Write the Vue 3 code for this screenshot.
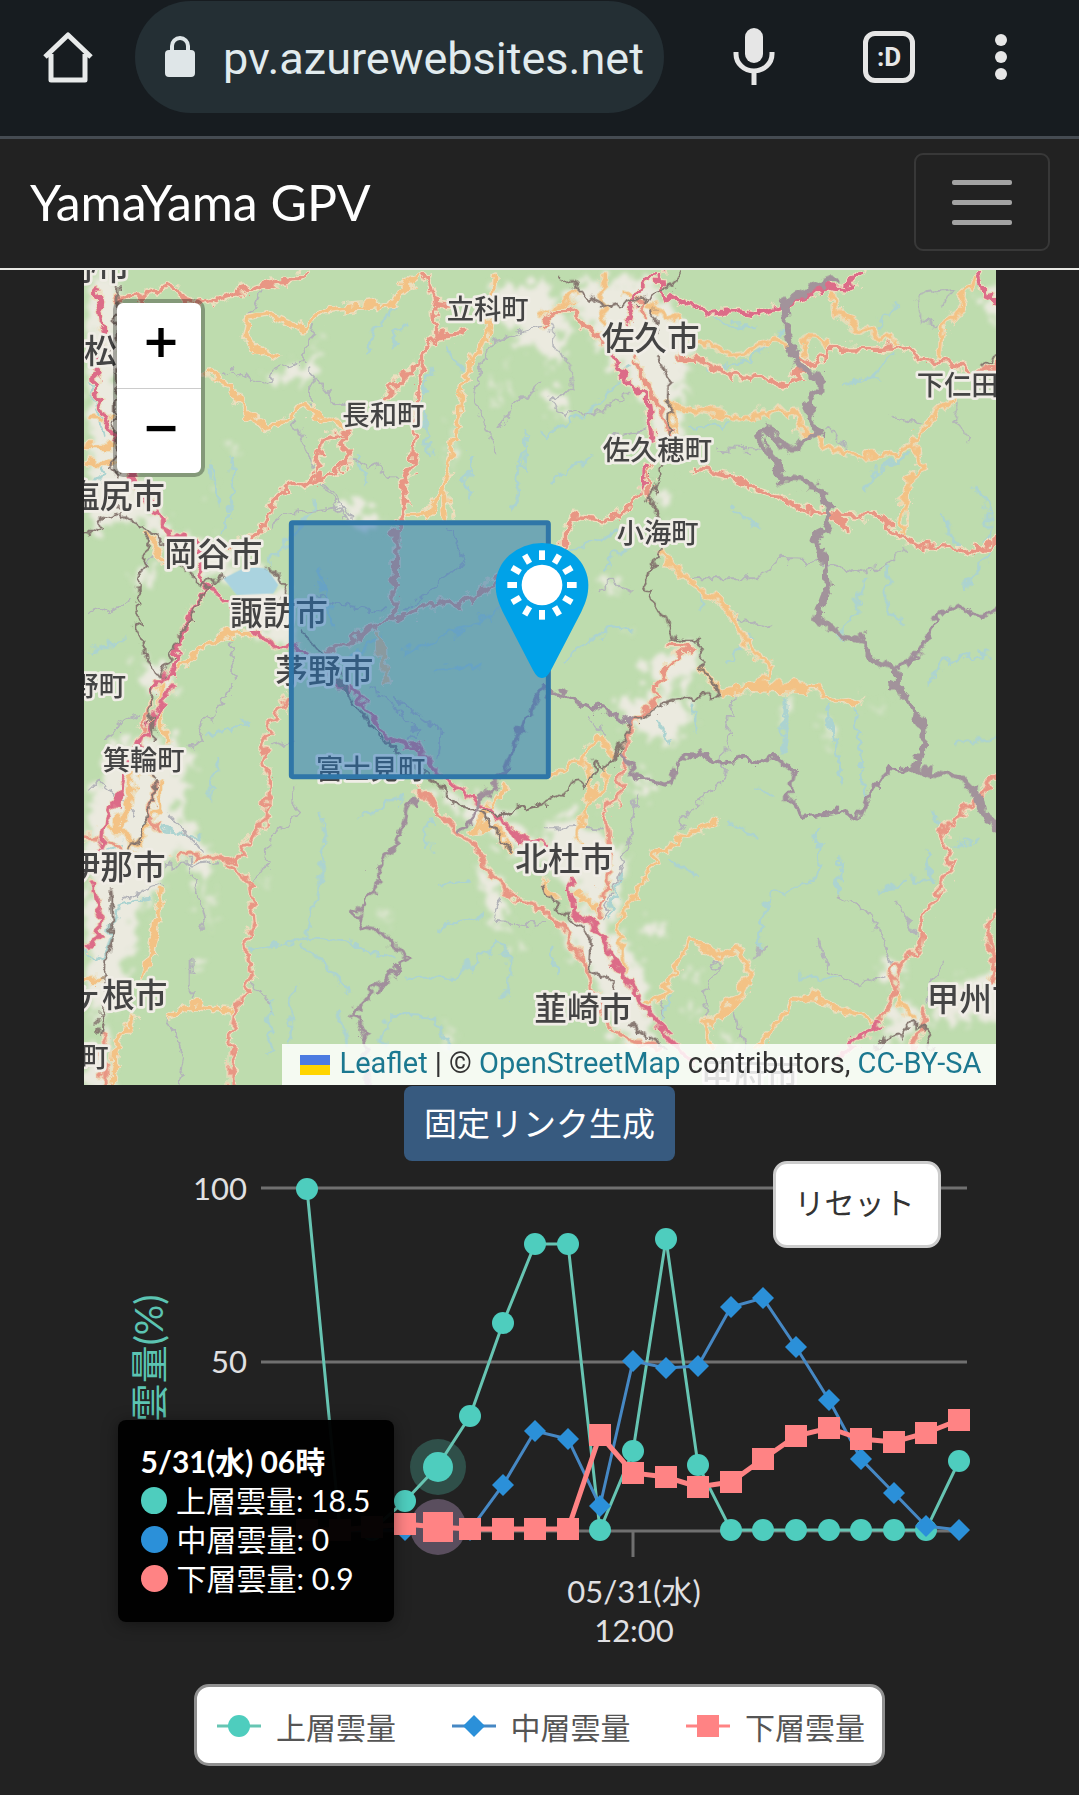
<script setup>
// Map artwork: four tiles, drawn at three units per pixel.
const tiles = [
  {
    id: 'nw', x: -12, y: -15,
    urban: 'M0 0H90L100 400L150 640L240 760L330 800L460 820L440 900L370 920L230 800L100 730L0 800Z M430 900Q520 860 600 960L620 1120L520 1100L440 960Z M540 310L660 270L700 180L690 310L620 330Z M750 700L830 680L880 760H780Z M1200 60L1380 20V260L1280 180L1200 120Z M130 920L240 840L170 960Z M150 1150L240 1200L280 1260H180Z M410 520L440 515L430 540Z M345 660L375 640L378 665Z M1080 450L1105 500L1090 600Z M1240 300L1260 380L1235 410Z',
    water: 'M430 940L500 905L560 910L595 960L580 985L470 990Z',
    river: 'M380 580L400 700 M440 560L455 640L410 800 M300 90L340 200 M930 110L870 180L850 250 M1040 300L1010 400L1040 560 M1160 560L1150 700 M1330 480L1310 640L1280 720 M960 160L920 240 M20 340L60 500 M30 640L60 600 M700 900L760 1080 M960 1150L1100 1100L1240 1030 M780 1180L900 1100 M1050 1200L1180 1190 M20 1150L130 1100 M820 560L850 640 M560 880L700 700 M1130 300L1090 240',
    minor: 'M410 310L450 300L540 350L590 300L650 275L690 180 M685 290L680 400 M690 320L750 390L780 410 M640 460L690 610L790 750 M720 640L800 740 M790 580L860 590L940 630 M560 780L620 730L780 710 M1380 170L1230 210L1190 290L1170 400L1240 550 M1240 480L1290 400L1380 350 M20 1040L140 1000 M540 60L500 140 M650 1010L700 985L800 1015L900 1030 M1100 780L1140 880L960 1030 M440 1120L450 1240 M180 900L230 850',
    secondary: 'M490 150L480 200L510 235L580 265 M490 150L560 135L660 180L730 125L920 105L940 70L1010 25 M370 310L430 350L490 440L550 475L640 440L665 405L720 455L790 480 M1230 15L1225 110L1210 200L1150 290L1130 400L1100 570L1070 680L1040 730L970 745 M1085 660L1095 750 M0 580L100 590 M0 530H90 M20 450H80 M280 1200L360 1130L450 1090L520 1090 M190 800L240 880 M880 1090L910 1240',
    primary: 'M95 90L180 85L245 50L290 70L320 110L400 90L540 45L650 30L680 15 M1025 15L1050 100L1055 205L1010 270L890 400 M1055 205L1130 195L1140 180 M1050 105L1100 110 M1020 270L1000 380L985 600L955 640L970 740L935 790L930 1050 M790 490L720 510L690 620 M785 500L795 585L690 635L620 650L570 700L540 770L510 800L440 825 M180 90L190 110 M730 1150L790 1130L850 1080L930 1045L960 1050L1080 990L1120 1010L1180 980L1250 935',
    motorway: 'M35 60L60 200L35 320L45 400L90 500L110 560L220 740L260 800L340 820L350 870L370 950L310 1050L280 1150L270 1200L200 1260 M370 950L430 990L530 1100L590 1140L650 1130L790 1260',
    rail: 'M100 20L95 620L110 730L200 790L350 950L420 920 M0 800L100 735 M190 800L180 900L160 960L165 1080L185 1180L230 1225L290 1100L370 950 M550 890L590 920L610 990 M660 1090L720 1165L790 1260'
  },
  {
    id: 'ne', x: 1368, y: -15,
    urban: 'M60 60L140 20H320L390 130L430 250L390 400L400 500L340 560L290 400L200 280L100 150Z M0 60L60 160L40 260L0 300Z M290 1180L400 1120L440 1150L430 1260H330Z M300 640L370 650L350 740Z M1290 60L1368 30V160Z M0 340L60 380L40 440L0 420Z M200 1070L245 1072L220 1080Z M150 950L200 930L230 960Z',
    river: 'M0 500L150 420L250 300 M20 640L140 560 M20 890L120 820L240 780 M490 130L560 170L640 170 M500 300L620 270L720 180 M900 340L1000 320L1040 260 M1060 100L1000 180 M960 660L1010 600L1090 560 M1190 740L1240 830 M1290 660L1340 720L1330 860L1260 960 M960 930L940 1020L890 1110 M1040 880L1030 1000L1080 1080 M470 960L475 1030 M560 1180L620 1100 M1150 1240L1200 1180L1330 1160 M250 830L180 900 M60 1180L180 1090L260 1080 M440 480L560 470 M560 720L640 780',
    minor: 'M20 170L40 250L80 290V360L10 390L50 430L160 430L250 380 M440 925H650L710 875L800 880L960 905L1030 890L1080 840 M160 970L200 935L260 970 M560 1040L690 1080 M200 500L300 480 M1040 445L1130 460 M520 540L650 545 M1240 390L1230 460L1280 520 M840 480L900 530 M1180 170L1130 160L1120 110L1140 70L1230 60L1200 110',
    secondary: 'M0 140L100 80 M175 20L180 160 M240 70L340 120L400 150L430 210L490 220L560 255L610 250L690 205L740 240 M870 60L880 130L940 180L1040 215L1060 235 M775 260L780 210L840 215L870 240 M1300 30L1260 60L1250 120L1200 160L1190 270 M395 410L480 430L540 440L590 450L660 430L760 430L765 490L820 500L840 530L940 560H1050L1110 520L1190 410L1240 380 M1105 530L1135 600L1090 640L1070 810 M350 850L440 940L520 990L600 1090L630 1160L690 1190L650 1245L750 1250 M480 1210L520 1260 M380 400L390 510',
    primary: 'M0 170L20 130L80 125L130 180L210 245 M400 270L460 265L560 320L640 320L730 350L775 310L760 260L800 290L860 240L1060 235L1150 280L1230 285L1280 320 M270 280L350 430L380 500 M315 600L320 680 M300 670L230 730L170 755L90 745L60 790L60 830 M450 600L550 615L680 680L730 685L780 720L850 735L910 780L880 740L1010 745L1070 810L1150 835L1250 840L1270 855L1300 830L1330 840L1368 805 M345 1260L370 1190L440 1135L385 1130 M1300 320L1368 280 M290 90L310 170',
    motorway: 'M350 20L355 70L390 90L440 100L490 130L580 125L640 135L710 115L850 50L920 60L950 15 M330 20L280 70L250 160 M200 240L230 320L310 390L325 520 M305 600L295 660 M1310 20L1320 70L1368 105',
    rail: 'M45 15L120 80L190 115L280 100L350 70L410 15 M340 270L380 340L375 510 M350 600L320 700L350 740 M350 840L305 940L325 1010L360 1040L390 1110L460 1110L480 1210L510 1250 M1310 300L1368 250 M330 120L340 200',
    boundary: 'M870 30L790 60L720 100L725 190L770 300L825 330L825 365L790 400L800 440L825 490L740 540L690 510L670 470L650 500L660 540L690 570L710 635L820 650L850 700L860 760L810 810L845 880L850 950L815 1045L900 1100L960 1115L990 1180L1060 1205V1260',
    border: 'M1065 1190L1130 1150L1180 1040L1240 1005L1300 1040L1368 1025'
  },
  {
    id: 'sw', x: -12, y: 1230,
    urban: 'M80 170L200 130L320 200L280 330L270 480L250 520L100 640L60 900L0 1000V330Z M260 380L350 480L380 720L330 560L280 480Z M1020 300L1160 330L1380 480V520L1260 500L1150 400Z M1160 520L1260 640L1260 730L1200 680Z M60 560L230 560L150 700L110 900L30 1020Z M1060 1000L1100 1050L1090 1090Z M860 690L900 680L890 710Z M0 1080L60 1050L80 1218H0Z M300 820L335 815L325 850Z M1270 770L1310 750L1300 780Z M510 580L540 590L520 600Z',
    river: 'M400 240L370 350 M720 400L710 600L660 760L600 780L500 795 M660 760L780 770L930 830 M660 780L790 920 M980 880L1120 880L1240 780L1280 820L1260 950 M560 960V1100 M630 930L610 1080 M760 980L790 1090 M900 1080L920 990L1050 1000L1090 1090 M1060 740L1200 690 M1040 400V500 M1070 600L1150 590 M0 800L60 830L100 660L200 640 M380 150L500 110 M830 400L960 340 M180 420L340 460 M20 560L110 480',
    minor: 'M440 0L380 110L340 170L310 190 M570 190L620 175 M640 310V400L560 460L540 570L510 590 M250 550L400 535 M320 530L370 740 M110 640L230 600 M320 820V950 M250 1000L300 1120L280 1218 M510 900L560 970 M1250 640L1230 710L1380 720 M1260 390L1260 420 M20 320L50 290L160 390 M260 390L350 500 M60 160L160 90 M930 40L1070 140L1060 230 M860 10L920 60L1000 130L980 180',
    secondary: 'M230 0V100L245 180 M160 270L100 440 M80 430L160 480 M230 620L200 800L180 890 M260 990L330 965L440 975 M150 1010L100 1070L80 1218 M0 890H50 M1260 310L1170 440L1230 430L1290 500 M230 290V370L140 500',
    primary: 'M200 60L170 170 M620 30L560 120L540 230L560 300L540 420L480 490L460 540L400 515L280 520 M430 545L500 600L515 720L480 790L505 890L460 960L445 1050V1218 M210 290L200 370L220 440 M0 460L60 465L130 510 M1000 310L1120 440L1170 480L1210 560L1270 630L1380 680 M60 1050L65 1218',
    motorway: 'M265 0L160 200L120 300L60 440L45 510 M20 590L50 700L45 750L10 790 M800 0L920 170L1000 190L1060 270L1170 350L1240 400L1300 460L1380 480',
    rail: 'M200 10L205 170 M210 280L200 390L140 500 M75 620L85 740L60 880L50 1050 M780 10L850 110L940 210L1060 300L1100 350L1170 380L1290 500 M1200 390H1270L1380 355',
    border: 'M1010 345L970 365L940 460L880 560V600L820 690L840 730L890 740L975 825L800 990L845 1050V1218 M1380 20L1320 110L1260 260L1200 350L1130 440'
  },
  {
    id: 'se', x: 1368, y: 1230,
    urban: 'M190 40L370 20L440 100L350 170L260 120Z M0 400L100 380L230 480L210 640L180 700L80 600L0 560Z M80 640L200 700L260 830L300 900L330 1092L200 1040L120 850L40 740Z M260 720L350 700L330 740Z M980 840L1060 820L1060 900Z M970 1092L1060 940L1150 1000L1180 900L1368 870V1000L1160 1000Z M480 1218L560 1040L590 1218Z M415 850L450 840L430 880Z M830 80L855 120L850 210Z M680 80L715 30L700 110Z M950 40L1020 70L960 60Z M430 920L450 1000L430 990Z M260 250L320 310L270 340Z',
    river: 'M720 40V210 M850 70L890 290 M930 70L960 330 M830 430L820 560L780 600L680 640L650 700V790 M380 530L460 570 M550 410L630 460 M890 530L880 630 M1230 490L1300 470 M1240 170H1360 M1100 590L1160 600L1150 500 M640 320L690 340 M770 880L880 890 M350 1010L380 940 M1080 600L1000 620 M380 180L340 110 M20 800L40 860 M1160 380L1180 420 M450 60V140 M230 560L200 690',
    minor: 'M570 30L550 160L540 280L440 380L400 440 M280 330L250 480L180 700 M530 830L480 930L490 1010 M570 990L600 1090 M880 640L980 690L1060 850 M820 770L850 860L930 905L1030 880 M1200 850L1160 890L1150 950 M0 430H180 M1050 650L1120 750 M620 820L660 790 M350 940L360 1000 M140 90L180 150',
    secondary: 'M30 270L110 235L130 190L170 160L210 210 M125 240L140 330L100 470 M180 260L185 320L140 340 M530 25L620 10L820 20L880 60L950 50 M510 415L430 450L340 520L280 620L220 720L240 860 M310 960L360 930L440 770L530 820L580 790L620 870L570 960L480 1030L500 1090 M640 1090L720 990L750 950L800 935L990 1010 M1060 930L1100 1010 M0 590L40 650 M100 630L160 680',
    primary: 'M345 0L330 60L290 90L260 130L240 200L230 350L180 360L195 490L185 610L160 700 M0 680L70 740L140 880L180 1000L230 1060L340 1090 M1368 270L1200 440L1190 430L1225 540L1180 640L1140 700L1130 800L1050 860V930L1010 1010 M1368 680L1325 720L1355 850L1330 900 M1100 1090L1140 1010V970',
    motorway: 'M80 590L85 680L160 730L190 800L250 890L300 980L440 1130 M870 1130L1010 1010',
    rail: 'M0 355L90 310L150 290L155 240L185 250L220 210L260 120L350 60L400 45L520 40L510 0 M0 600L30 660L120 730L145 790L140 860L200 890L210 930 M270 1030L360 1090 M1000 1090L1110 1025L1150 1030L1160 1090',
    boundary: 'M1055 0L1140 130V180L1110 260L1260 290L1300 330L1310 380L1368 430',
    border: 'M0 10L30 20L100 55L180 75L260 120 M230 210L280 280L370 300L400 240L440 205L530 235L600 225L640 240L690 215L750 260L735 340L780 400L880 380L945 400L980 310L1050 255L1110 260'
  }
]

const lines = [
  { key: 'river' },
  { key: 'minor' },
  { key: 'secondary', cased: true },
  { key: 'primary', cased: true },
  { key: 'motorway', cased: true },
  { key: 'rail' },
  { key: 'border' },
  { key: 'boundary' }
]

const places = [
  { name: '安曇野市', x: 138, y: 30, city: true, end: true },
  { name: '立科町', x: 1088, y: 147 },
  { name: '松', x: 0, y: 280, city: true },
  { name: '長和町', x: 775, y: 465 },
  { name: '塩尻市', x: 243, y: 714, city: true, end: true },
  { name: '岡谷市', x: 241, y: 888, city: true },
  { name: '諏訪市', x: 438, y: 1064, city: true },
  { name: '茅野市', x: 574, y: 1238, city: true },
  { name: '佐久市', x: 1553, y: 240, city: true },
  { name: '佐久穂町', x: 1556, y: 569 },
  { name: '小海町', x: 1598, y: 820 },
  { name: '下仁田町', x: 2498, y: 375 },
  { name: '辰野町', x: 126, y: 1278, end: true },
  { name: '箕輪町', x: 56, y: 1499 },
  { name: '富士見町', x: 696, y: 1527 },
  { name: '伊那市', x: 245, y: 1828, city: true, end: true },
  { name: '駒ヶ根市', x: 250, y: 2210, city: true, end: true },
  { name: '飯島町', x: 74, y: 2392, end: true },
  { name: '北杜市', x: 1294, y: 1802, city: true },
  { name: '韮崎市', x: 1645, y: 2254, city: true, end: true },
  { name: '甲州市', x: 2528, y: 2224, city: true },
  { name: '甲府市', x: 1850, y: 2452, city: true }
]

const rays = Array.from({ length: 12 }, (_, i) => i * 30)

// Cloud cover by hour, in percent.
const upper = [100, 0, 0, 8.5, 18.5, 33.4, 60.7, 83.9, 83.9, 0, 23.2, 85.3, 19.1, 0, 0, 0, 0, 0, 0, 0, 20.2]
const middle = [0, 0, 0, 0, 0, 0, 13.3, 29, 26.7, 6.9, 49.6, 47.5, 48.1, 65.4, 67.9, 53.8, 38.1, 20.8, 10.9, 1.2, 0]
const lower = [0, 0, 1, 1.9, 0.9, 0.3, 0.3, 0.3, 0.3, 27.9, 16.7, 15.4, 12.6, 14.1, 20.8, 27.6, 29.8, 26.7, 25.8, 28.3, 32.4]
const selected = 4

const toPoints = (values) =>
  values.map((v, i) => ({ x: Math.round(223 + i * 32.6), y: Math.round(369 - v * 3.41) }))
const toLine = (points) => points.map((p) => `${p.x},${p.y}`).join(' ')

const series = [
  { name: '上層雲量', kind: 'upper', shape: 'circle', points: toPoints(upper), value: 18.5 },
  { name: '中層雲量', kind: 'middle', shape: 'diamond', points: toPoints(middle), value: 0 },
  { name: '下層雲量', kind: 'lower', shape: 'square', points: toPoints(lower), value: 0.9 }
]

const markerPath = (shape, x, y, r) => {
  if (shape === 'circle') return `M${x - r} ${y}a${r} ${r} 0 1 0 ${2 * r} 0a${r} ${r} 0 1 0 ${-2 * r} 0z`
  if (shape === 'diamond') return `M${x} ${y - r}L${x + r} ${y}L${x} ${y + r}L${x - r} ${y}z`
  return `M${x - r} ${y - r}h${2 * r}v${2 * r}h${-2 * r}z`
}
</script>

<template>
  <div class="screen">
    <header class="browser">
      <button class="tool" aria-label="ホーム">
        <svg width="52" height="56" viewBox="0 0 52 56">
          <path d="M9 25V51H43V25M3 28L26 6L49 28" fill="none" stroke="#e8eaea" stroke-width="5" stroke-linejoin="round" />
        </svg>
      </button>
      <div class="address">
        <svg width="30" height="42" viewBox="0 0 30 42">
          <rect y="14" width="30" height="27" rx="4" fill="#dfe6e8" />
          <path d="M7 15V10a8 8 0 0 1 16 0V15" fill="none" stroke="#dfe6e8" stroke-width="4" />
        </svg>
        <span>pv.azurewebsites.net</span>
      </div>
      <button class="tool mic" aria-label="音声検索">
        <svg width="42" height="60" viewBox="0 0 42 60">
          <rect x="12" y="1" width="18" height="35" rx="9" fill="#e6e6e6" />
          <path d="M3 25V27a18 17 0 0 0 36 0V25M21 44V58" fill="none" stroke="#e6e6e6" stroke-width="5" />
        </svg>
      </button>
      <button class="tabs" aria-label="タブ">:D</button>
      <button class="tool more" aria-label="メニュー">
        <svg width="14" height="50" viewBox="0 0 14 50" fill="#e6e6e6">
          <circle cx="7" cy="8" r="6" /><circle cx="7" cy="25" r="6" /><circle cx="7" cy="42" r="6" />
        </svg>
      </button>
    </header>

    <nav class="navbar">
      <a class="brand" href="#">YamaYama GPV</a>
      <button class="toggler" aria-label="ナビゲーション">
        <i></i><i></i><i></i>
      </button>
    </nav>

    <main>
      <section class="map">
        <svg class="canvas" viewBox="0 0 2736 2445" preserveAspectRatio="xMidYMid slice">
          <defs>
            <filter id="soft" x="-5%" y="-5%" width="110%" height="110%">
              <feTurbulence baseFrequency="0.02" numOctaves="3" seed="4" />
              <feDisplacementMap in="SourceGraphic" scale="110" xChannelSelector="R" yChannelSelector="G" />
              <feGaussianBlur stdDeviation="7" />
            </filter>
            <filter id="winding" x="0" y="0" width="100%" height="100%">
              <feTurbulence baseFrequency="0.018" numOctaves="2" seed="9" />
              <feDisplacementMap in="SourceGraphic" scale="46" xChannelSelector="R" yChannelSelector="G" />
            </filter>
          </defs>
          <rect class="land" width="2736" height="2445" />
          <g filter="url(#soft)">
            <path v-for="t in tiles" :key="t.id" class="urban" :d="t.urban" :transform="`translate(${t.x} ${t.y})`" />
          </g>
          <path class="water" :d="tiles[0].water" transform="translate(-12 -15)" />
          <g filter="url(#winding)">
            <template v-for="line in lines" :key="line.key">
              <template v-for="t in tiles" :key="t.id">
                <path v-if="line.cased" class="line casing" :d="t[line.key]" :transform="`translate(${t.x} ${t.y})`" />
              </template>
              <template v-for="t in tiles" :key="t.id">
                <path v-if="t[line.key]" class="line" :class="line.key" :d="t[line.key]" :transform="`translate(${t.x} ${t.y})`" />
              </template>
            </template>
          </g>
          <text
            v-for="p in places" :key="p.name" class="place"
            :class="{ city: p.city, end: p.end }" :x="p.x" :y="p.y"
          >{{ p.name }}</text>
          <rect class="area" x="622" y="758" width="771" height="762" rx="4" />
          <g transform="translate(1374 945)">
            <path d="M0 279C-14 279 -20 268 -30 250L-118 80C-132 50 -139 30 -139 0A139 126 0 0 1 139 0C139 30 132 50 118 80L30 250C20 268 14 279 0 279Z" fill="#00a2e8" />
            <circle r="61" fill="#fff" />
            <path v-for="a in rays" :key="a" d="M0 -75V-104" stroke="#fff" stroke-width="18" :transform="`rotate(${a})`" />
          </g>
        </svg>
        <div class="zoom">
          <button aria-label="拡大">+</button>
          <button aria-label="縮小">−</button>
        </div>
        <div class="attribution">
          <svg width="30" height="20" viewBox="0 0 30 20"><path d="M0 0H30V10H0z" fill="#4c7be1" /><path d="M0 10H30V20H0z" fill="#ffd500" /></svg>
          <p><a href="#">Leaflet</a> | © <a href="#">OpenStreetMap</a> contributors, <a href="#">CC-BY-SA</a></p>
        </div>
      </section>

      <button class="permalink">固定リンク生成</button>

      <section class="chart">
        <svg class="plot" viewBox="0 0 912 499">
          <path class="grid" d="M177 27H883M177 201H883M177 370H883M549 370V396" />
          <g class="axis">
            <text class="right" x="163" y="39">100</text>
            <text class="right" x="163" y="212">50</text>
            <text class="mid" x="550" y="442">05/31(水)</text>
            <text class="mid" x="550" y="481">12:00</text>
            <text class="title" transform="translate(79 197) rotate(-90)">雲量(%)</text>
          </g>
          <g v-for="s in series" :key="s.kind" :class="s.kind">
            <circle v-if="s.kind !== 'middle'" class="halo" :cx="s.points[selected].x + 1" :cy="s.points[selected].y" r="28" />
            <polyline :points="toLine(s.points)" />
            <path
              v-for="(p, i) in s.points" :key="i" class="marker"
              :d="markerPath(s.shape, i === selected ? p.x + 1 : p.x, p.y, i === selected && s.kind !== 'middle' ? 15 : 11)"
            />
          </g>
        </svg>
        <button class="reset">リセット</button>
        <div class="tooltip">
          <strong>5/31(水) 06時</strong>
          <span v-for="s in series" :key="s.kind" :class="s.kind"><i></i>{{ s.name }}: {{ s.value }}</span>
        </div>
        <div class="legend">
          <span v-for="s in series" :key="s.kind" class="entry">
            <svg :class="s.kind" width="44" height="24" viewBox="0 0 44 24">
              <path class="dash" d="M0 12H44" />
              <path class="marker" :d="markerPath(s.shape, 22, 12, 11)" />
            </svg>
            {{ s.name }}
          </span>
        </div>
      </section>
    </main>
  </div>
</template>

<style>
body {
  margin: 0;
  background: #222;
}
</style>

<style scoped>
.screen {
  background: #222;
  color: #fff;
  font-family: Lato, "Noto Sans CJK JP", sans-serif;
  font-size: 30px;
}
button {
  box-sizing: border-box;
  margin: 0;
  padding: 0;
  border: 0;
  background: none;
  color: inherit;
  font-family: inherit;
}
svg {
  display: block;
}
a {
  text-decoration: none;
}
.browser {
  display: flex;
  align-items: center;
  height: 112px;
  padding: 1px 71px 23px 42px;
  border-bottom: 3px solid #454b52;
  background: #171c20;
}
.address {
  display: flex;
  flex: 1;
  align-items: center;
  gap: 28px;
  height: 112px;
  margin-left: 41px;
  padding-left: 30px;
  border-radius: 56px;
  background: #242f34;
  color: #e1ebee;
  font-family: Roboto, sans-serif;
  font-size: 45px;
}
.address span {
  padding-top: 3px;
}
.mic {
  margin-left: 69px;
}
.tabs {
  width: 52px;
  height: 52px;
  margin-left: 88px;
  border: 5px solid #e6e6e6;
  border-radius: 12px;
  color: #e6e6e6;
  font-family: Roboto, sans-serif;
  font-size: 26px;
  font-weight: 700;
  line-height: 38px;
}
.more {
  margin-left: 79px;
}
.navbar {
  display: flex;
  align-items: center;
  justify-content: space-between;
  height: 126px;
  padding: 0 29px 3px 30px;
  border-bottom: 2px solid #e8e8e4;
}
.brand {
  color: #fff;
  font-size: 50px;
}
.toggler {
  display: flex;
  flex-direction: column;
  align-items: center;
  justify-content: center;
  gap: 15px;
  width: 136px;
  height: 98px;
  border: 2px solid #383838;
  border-radius: 9px;
}
.toggler i {
  width: 60px;
  height: 5px;
  border-radius: 2px;
  background: #a3a3a3;
}
main {
  display: flex;
  flex-direction: column;
  align-items: center;
}
.map {
  position: relative;
  width: calc(100% - 167px);
  aspect-ratio: 912 / 815;
  overflow: hidden;
}
.canvas {
  width: 100%;
  height: 100%;
}
.land {
  fill: #bedcae;
}
.urban {
  fill: #efebe4;
  opacity: 0.9;
}
.water {
  fill: #aad3df;
}
.line {
  fill: none;
  stroke-linecap: round;
  stroke-linejoin: round;
}
.river {
  stroke: #acd3d0;
  stroke-width: 9;
}
.minor {
  stroke: #b3b4b9;
  stroke-width: 6;
}
.secondary {
  stroke: #f3c285;
  stroke-width: 14;
}
.primary {
  stroke: #e89684;
  stroke-width: 13;
}
.motorway {
  stroke: #dc6c88;
  stroke-width: 15;
}
.casing {
  stroke: #ecdfbf;
  stroke-width: 23;
}
.rail {
  stroke: #85766f;
  stroke-width: 8;
}
.border {
  stroke: #a18f9c;
  stroke-width: 13;
}
.boundary {
  stroke: #a2939b;
  stroke-width: 21;
}
.place {
  fill: #444;
  stroke: #f0ede6;
  stroke-width: 16;
  stroke-linejoin: round;
  paint-order: stroke;
  font-family: "Noto Sans CJK JP", sans-serif;
  font-size: 82px;
  font-weight: 500;
}
.city {
  font-size: 98px;
}
.end {
  text-anchor: end;
}
.area {
  fill: #2272ba;
  fill-opacity: 0.5;
  stroke: #2f76a8;
  stroke-width: 15;
}
.zoom {
  position: absolute;
  top: 29px;
  left: 29px;
  border: 4px solid rgba(0, 0, 0, 0.3);
  border-radius: 10px;
  background: #fff;
  background-clip: padding-box;
}
.zoom button {
  display: block;
  width: 84px;
  height: 85px;
  padding: 0 0 9px 5px;
  color: #000;
  font-family: "DejaVu Sans", sans-serif;
  font-size: 46px;
  font-weight: 700;
}
.zoom button + button {
  border-top: 1px solid #ccc;
}
.attribution {
  position: absolute;
  right: 0;
  bottom: 0;
  display: flex;
  align-items: center;
  gap: 10px;
  height: 41px;
  padding: 0 14px 0 18px;
  background: rgba(255, 255, 255, 0.84);
  color: #333;
  font-family: Roboto, sans-serif;
  font-size: 29px;
  line-height: 36px;
  white-space: nowrap;
}
.attribution p {
  margin: 0;
  padding-bottom: 3px;
}
.attribution a {
  color: #1b7890;
}
.permalink {
  height: 75px;
  margin-top: 1px;
  padding: 0 20px 4px;
  border-radius: 8px;
  background: #375a7f;
  font-size: 33px;
}
.chart {
  position: relative;
  width: calc(100% - 167px);
  padding-bottom: 29px;
}
.plot {
  width: 100%;
}
.grid {
  fill: none;
  stroke: #707070;
  stroke-width: 3;
}
.axis {
  fill: #e0e0e3;
  font-size: 31px;
}
.right {
  text-anchor: end;
}
.mid,
.title {
  text-anchor: middle;
}
.title {
  fill: #5cc4b2;
  font-size: 38px;
}
.upper {
  --tone: #4ecdbe;
  --thin: #67c5b3;
}
.middle {
  --tone: #2b90d9;
  --thin: #4688c4;
}
.lower {
  --tone: #ff8384;
  --thin: #ff8384;
}
.marker {
  fill: var(--tone);
}
.halo {
  fill: #2f4f49;
}
.lower .halo {
  fill: #5a4e5e;
}
polyline {
  fill: none;
  stroke: var(--thin);
  stroke-width: 3;
}
.lower polyline {
  stroke-width: 5;
}
.dash {
  stroke: var(--thin);
  stroke-width: 3;
}
.reset {
  position: absolute;
  top: 0;
  right: 55px;
  width: 168px;
  height: 87px;
  padding: 0 4px 8px 0;
  border: 3px solid #ccc;
  border-radius: 14px;
  background: #fff;
  color: #333;
  font-size: 30px;
}
.tooltip {
  position: absolute;
  top: 259px;
  left: 34px;
  display: flex;
  box-sizing: border-box;
  flex-direction: column;
  width: 276px;
  height: 202px;
  padding: 22px 23px;
  border-radius: 8px;
  background: rgba(0, 0, 0, 0.97);
  box-shadow: 0 2px 16px rgba(0, 0, 0, 0.4);
  line-height: 39px;
  white-space: nowrap;
}
.tooltip span {
  display: flex;
  align-items: center;
  gap: 9px;
}
.tooltip i {
  width: 27px;
  height: 27px;
  border-radius: 50%;
  background: var(--tone);
}
.legend {
  display: flex;
  box-sizing: border-box;
  align-items: center;
  justify-content: space-between;
  width: 691px;
  height: 82px;
  margin: 24px auto 0;
  padding: 2px 17px 0 20px;
  border: 3px solid #909090;
  border-radius: 15px;
  background: #fff;
  color: #555;
}
.entry {
  display: flex;
  align-items: center;
  gap: 15px;
}
</style>
